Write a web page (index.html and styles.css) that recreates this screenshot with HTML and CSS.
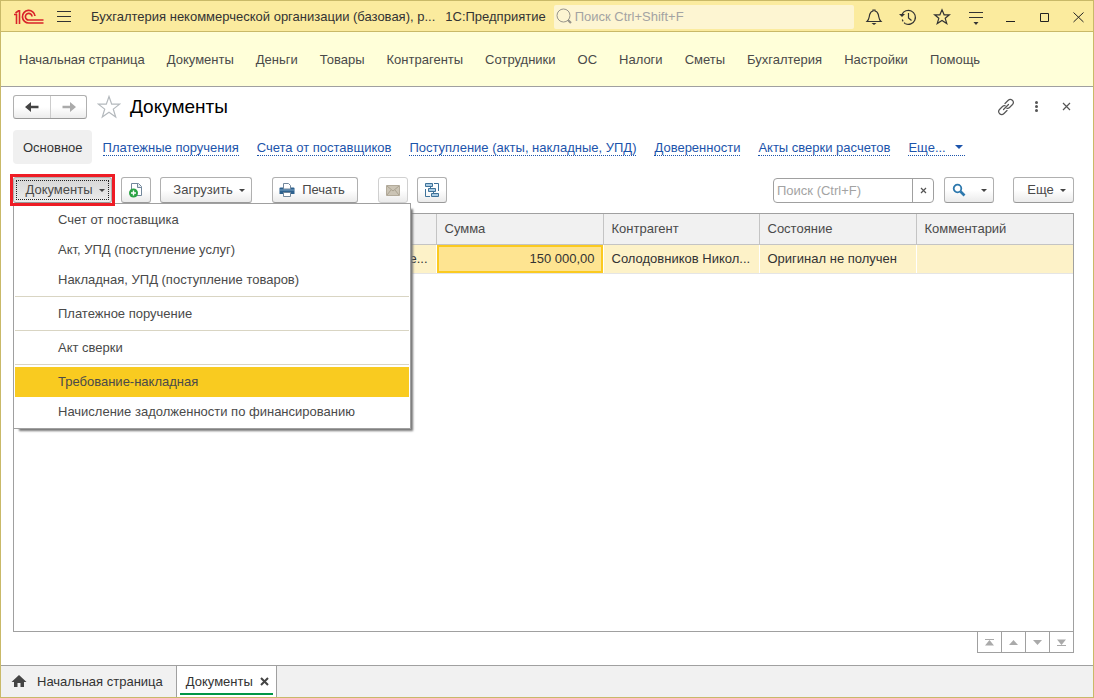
FILE: index.html
```html
<!DOCTYPE html>
<html lang="ru">
<head>
<meta charset="utf-8">
<title>Документы</title>
<link rel="stylesheet" href="styles.css">
</head>
<body>
<div class="window">
  <header class="titlebar">
    <svg class="logo" width="30" height="16" viewBox="0 0 30 16" fill="none" stroke="#d9232a" aria-label="1С">
      <path d="M0 5.500h2.500v9.500M1.500 4L4.500 1.800h1V15" stroke-width="1.600"/>
      <path d="M21 7A6.300 6.300 0 1 0 15 14H29.500" stroke-width="1.700"/>
      <path d="M18 7.500A3.300 3.300 0 1 0 15 11H29.500" stroke-width="1.700"/>
    </svg>
    <button class="icon-btn burger" aria-label="Меню"><svg width="16" height="14" viewBox="0 0 16 14" stroke="#333"><path d="M1 1.500h14M1 6.500h14M1 11.500h14"/></svg></button>
    <span class="app-name">Бухгалтерия некоммерческой организации (базовая), р...</span>
    <span class="platform">1С:Предприятие</span>
    <label class="global-search">
      <svg width="17" height="17" viewBox="0 0 17 17" fill="none" stroke="#97948b"><circle cx="7.500" cy="7.500" r="6.500"/><path d="M12 12l3 3" stroke-width="2.200"/></svg>
      <input type="text" placeholder="Поиск Ctrl+Shift+F" aria-label="Поиск Ctrl+Shift+F">
    </label>
    <div class="title-actions">
      <button class="icon-btn" aria-label="Уведомления"><svg width="18" height="18" viewBox="0 0 18 18" fill="none" stroke="#333" stroke-width="1.200"><path d="M2 13.500C4.500 11 4 9 4.700 6.500 5.300 4.300 6.500 3.300 8 3V2h2v1c1.500.3 2.700 1.300 3.300 3.500.7 2.500.2 4.500 2.700 7z"/><path d="M6.500 15h5L9 17z" fill="#333" stroke="none"/></svg></button>
      <button class="icon-btn" aria-label="История"><svg width="18" height="18" viewBox="0 0 18 18" fill="none" stroke="#333" stroke-width="1.200"><path d="M3 6.500A7 7 0 1 1 6.500 15.700" /><path d="M3.300 11.500A7 7 0 0 0 6.500 15.700" stroke-dasharray="2 1.500"/><path d="M9.500 5v5l3 2.500"/><path d="M0 6h6L3 9z" fill="#333" stroke="none"/></svg></button>
      <button class="icon-btn" aria-label="Избранное"><svg width="18" height="18" viewBox="0 0 18 18" fill="none" stroke="#333" stroke-width="1.200"><path d="M9 1.800l2.100 5h5.300l-4.200 3.500 1.600 5.300L9 12.500l-4.800 3.100 1.600-5.300L1.600 6.800h5.300z"/></svg></button>
      <button class="icon-btn" aria-label="Настройка"><svg width="18" height="18" viewBox="0 0 18 18" fill="none" stroke="#333"><path d="M2 4.500h14M2 9.500h14"/><path d="M6.500 14h5L9 17z" fill="#333" stroke="none"/></svg></button>
      <button class="icon-btn" aria-label="Свернуть"><svg width="18" height="18" viewBox="0 0 18 18" stroke="#222"><path d="M5 13.500h9"/></svg></button>
      <button class="icon-btn" aria-label="Развернуть"><svg width="18" height="18" viewBox="0 0 18 18" fill="none" stroke="#222"><path d="M5.500 5.500h8v8h-8z"/></svg></button>
      <button class="icon-btn" aria-label="Закрыть"><svg width="18" height="18" viewBox="0 0 18 18" stroke="#222"><path d="M4.500 4.500l10 9.500M14.500 4.500l-10 9.500"/></svg></button>
    </div>
  </header>

  <nav class="sections">
    <a href="#">Начальная страница</a><a href="#">Документы</a><a href="#">Деньги</a><a href="#">Товары</a><a href="#">Контрагенты</a><a href="#">Сотрудники</a><a href="#">ОС</a><a href="#">Налоги</a><a href="#">Сметы</a><a href="#">Бухгалтерия</a><a href="#">Настройки</a><a href="#">Помощь</a>
  </nav>

  <main class="page">
    <div class="page-head">
      <div class="history">
        <button aria-label="Назад"><svg width="16" height="12" viewBox="0 0 16 12"><path d="M1 6l6-5v3.800h7.500v2.400H7V11z" fill="#444"/></svg></button>
        <button aria-label="Вперед"><svg width="16" height="12" viewBox="0 0 16 12"><path d="M15 6L9 1v3.800H1.500v2.400H9V11z" fill="#aaa"/></svg></button>
      </div>
      <button class="icon-btn fav" aria-label="В избранное"><svg width="24" height="24" viewBox="0 0 24 24" fill="none" stroke="#b4b9bd" stroke-width="1.200"><path d="M12 1.500l2.700 7.700h7.900l-6.300 4.900 2.400 8L12 17.300l-6.700 4.800 2.400-8L1.400 9.200h7.900z"/></svg></button>
      <h1>Документы</h1>
      <div class="page-actions">
        <button class="icon-btn" aria-label="Ссылка"><svg width="18" height="18" viewBox="0 0 18 18" fill="none" stroke="#555" stroke-width="1.200" stroke-linecap="round"><path d="M6.500 11.500l5-5"/><path d="M8 5.500L11 2.500c3-3 7 1 4.500 4L12.500 9.500c-.8.8-1.800 1-2.700.7"/><path d="M10 12.500L7 15.500c-3 3-7-1-4.500-4l3-3c.8-.8 1.800-1 2.700-.7"/></svg></button>
        <button class="icon-btn" aria-label="Еще действия"><svg width="18" height="18" viewBox="0 0 18 18" fill="#555"><circle cx="9.500" cy="4.500" r="1.500"/><circle cx="9.500" cy="8.500" r="1.500"/><circle cx="9.500" cy="12.500" r="1.500"/></svg></button>
        <button class="icon-btn" aria-label="Закрыть страницу"><svg width="18" height="18" viewBox="0 0 18 18" stroke="#555" stroke-width="1.200"><path d="M6 5l7 7M13 5l-7 7"/></svg></button>
      </div>
    </div>

    <nav class="subnav">
      <span class="current">Основное</span>
      <a href="#">Платежные поручения</a>
      <a href="#">Счета от поставщиков</a>
      <a href="#">Поступление (акты, накладные, УПД)</a>
      <a href="#">Доверенности</a>
      <a href="#">Акты сверки расчетов</a>
      <a href="#" class="more">Еще...<i class="caret blue"></i></a>
    </nav>

    <div class="toolbar">
      <div class="dropdown">
        <button class="btn docs-btn">Документы<i class="caret"></i></button>
        <div class="marker"></div>
        <div class="menu" role="menu">
          <button role="menuitem">Счет от поставщика</button>
          <button role="menuitem">Акт, УПД (поступление услуг)</button>
          <button role="menuitem">Накладная, УПД (поступление товаров)</button>
          <hr>
          <button role="menuitem">Платежное поручение</button>
          <hr>
          <button role="menuitem">Акт сверки</button>
          <hr>
          <button role="menuitem" class="active">Требование-накладная</button>
          <button role="menuitem">Начисление задолженности по финансированию</button>
        </div>
      </div>
      <button class="btn square" aria-label="Создать"><svg width="16" height="16" viewBox="0 0 16 16"><path d="M3.500 1.500h7l3 3v9h-10z" fill="#fff" stroke="#72879b"/><path d="M9.500 1.500v4h4" fill="#dfe7ee" stroke="#72879b"/><circle cx="5.500" cy="11" r="4.500" fill="#2ba344"/><path d="M5.500 8.500v5M3 11h5" stroke="#fff" stroke-width="1.400"/></svg></button>
      <button class="btn load">Загрузить<i class="caret"></i></button>
      <button class="btn print"><svg width="16" height="16" viewBox="0 0 16 16"><path d="M1.500 5.500h13q1 0 1 1V12h-15V6.500q0-1 1-1z" fill="#2d618e"/><path d="M4.500 7V1.500h5l2 2V7z" fill="#fff" stroke="#72879b"/><path d="M1 8h14" stroke="#7ba3c4"/><path d="M4.500 10.500h7v4h-7z" fill="#fff" stroke="#72879b"/></svg>Печать</button>
      <button class="btn square mail" aria-label="Отправить" disabled><svg width="14" height="11" viewBox="0 0 14 11"><path d="M.5.5h13v10H.500z" fill="#cbc4b5" stroke="#b3ab9b"/><path d="M1 1l6 5 6-5M1 10l4-5M13 10L9 5" fill="none" stroke="#aaa291"/></svg></button>
      <button class="btn square" aria-label="Структура"><svg width="16" height="16" viewBox="0 0 16 16" fill="#a9cbe3" stroke="#3f7299"><path d="M1.500 1.500h7v3h-7zM4.500 6.500h7v3h-7zM7.500 11.500h7v3h-7z"/><path d="M10 1.500h4.500V9M1.500 7v7.500H6M6.500 5v1.500M9.500 10v1.500" fill="none"/></svg></button>
      <div class="toolbar-right">
        <div class="search">
          <input type="text" placeholder="Поиск (Ctrl+F)" aria-label="Поиск (Ctrl+F)">
          <button aria-label="Очистить"><svg width="7" height="7" viewBox="0 0 7 7" stroke="#555" stroke-width="1.200"><path d="M1 1l5 5M6 1L1 6"/></svg></button>
        </div>
        <button class="btn find" aria-label="Найти"><svg width="14" height="14" viewBox="0 0 14 14" fill="none" stroke="#2d78ad"><circle cx="5.500" cy="5.500" r="3.800" stroke-width="1.800"/><path d="M8.500 8.500l4 4" stroke-width="2.600"/></svg><i class="caret"></i></button>
        <button class="btn more-btn">Еще<i class="caret"></i></button>
      </div>
    </div>

    <div class="grid-box">
      <table>
        <colgroup><col class="c-doc"><col class="c-sum"><col class="c-agent"><col class="c-state"><col></colgroup>
        <thead><tr><th></th><th>Сумма</th><th>Контрагент</th><th>Состояние</th><th>Комментарий</th></tr></thead>
        <tbody><tr><td class="right">е...</td><td class="right selected">150 000,00</td><td>Солодовников Никол...</td><td>Оригинал не получен</td><td></td></tr></tbody>
      </table>
    </div>
    <div class="pager">
      <button aria-label="В начало"><svg width="9" height="7" viewBox="0 0 9 7" fill="#aaa"><path d="M0 0h9v1H0zM4.500 1L9 6.500H0z"/></svg></button>
      <button aria-label="Вверх"><svg width="9" height="7" viewBox="0 0 9 7" fill="#aaa"><path d="M4.500 1L9 6H0z"/></svg></button>
      <button aria-label="Вниз"><svg width="9" height="7" viewBox="0 0 9 7" fill="#aaa"><path d="M0 1h9L4.500 6z"/></svg></button>
      <button aria-label="В конец"><svg width="9" height="7" viewBox="0 0 9 7" fill="#aaa"><path d="M0 .5h9L4.500 6zM0 6h9v1H0z"/></svg></button>
    </div>
  </main>

  <footer class="tabs">
    <a href="#" class="home"><svg width="16" height="16" viewBox="0 0 16 16"><path d="M8 1l7.500 7H13v5H9.500V9h-3v4H3V8H.500z" fill="#444"/></svg>Начальная страница</a>
    <div class="tab"><span>Документы</span><button class="icon-btn" aria-label="Закрыть вкладку"><svg width="9" height="9" viewBox="0 0 9 9" stroke="#444" stroke-width="2"><path d="M1 1l7 7M8 1L1 8"/></svg></button></div>
  </footer>
</div>
</body>
</html>
```
FILE: styles.css
```css
* { box-sizing: border-box; }
html, body { height: 100%; margin: 0; }
body, button, input {
  font-family: "Liberation Sans", Arial, sans-serif;
  font-size: 13px;
  line-height: 16px;
  color: #4a4a4a;
}
button { padding: 0; cursor: pointer; }
svg { display: block; flex: none; }
a { color: inherit; text-decoration: none; }

.window {
  display: flex;
  flex-direction: column;
  min-height: 100vh;
  border: 1px solid #c9b968;
  background: #fff;
}
.icon-btn { border: 0; background: none; display: flex; align-items: center; justify-content: center; }

.titlebar {
  display: flex;
  align-items: center;
  height: 31px;
  padding: 1px 6px 0 13px;
  background: #fbeb9e;
  border-bottom: 1px solid #c9b968;
  color: #333;
  white-space: nowrap;
}
.burger { margin: 0 19px 0 12px; }
.platform { margin: 0 8px 0 10px; }
.global-search {
  flex: 1;
  display: flex;
  align-items: center;
  gap: 2px;
  height: 24px;
  padding-left: 2px;
  border-radius: 2px;
  background: #fdf5d2;
}
.global-search input { flex: 1; min-width: 0; border: 0; padding: 0; outline: 0; background: none; }
input::placeholder { color: #a3a3a3; opacity: 1; }
.title-actions { display: flex; gap: 16px; margin-left: 11px; }

.sections {
  display: flex;
  align-items: center;
  gap: 22px;
  height: 55px;
  padding: 2px 18px 0;
  background: #ffffd9;
  border-bottom: 1px solid #a0a0a0;
  white-space: nowrap;
}

.page { flex: 1; display: flex; flex-direction: column; padding: 8px 19px 12px 12px; }
.page-head { display: flex; align-items: center; height: 24px; }
.history { display: flex; height: 24px; border: 1px solid #b0b0b0; border-bottom-color: #999; border-radius: 3px; background: linear-gradient(#fff 50%, #ececec); }
.history button { display: flex; align-items: center; justify-content: center; width: 36px; border: 0; background: none; }
.history button + button { border-left: 1px solid #ccc; }
.fav { margin: 0 9px 0 10px; }
h1 { margin: 0; font-size: 19px; line-height: 24px; font-weight: 400; color: #000; }
.page-actions { display: flex; gap: 12px; margin-left: auto; margin-right: -1px; }

.subnav { display: flex; align-items: center; gap: 18px; margin-top: 11px; height: 34px; white-space: nowrap; }
.subnav a { color: #1c54ab; line-height: 14px; padding-top: 2px; border-bottom: 1px dotted #1c54ab; }
.current { padding: 10px 9px 8px 10px; margin-right: -7px; border-radius: 4px; background: #f0f0f0; color: #333; }
.caret { display: inline-block; border: 3px solid transparent; border-top-color: #444; border-bottom: 0; }
.caret.blue { border-width: 4px; border-top-color: #1c54ab; border-bottom: 0; margin-left: 9px; margin-right: 2px; vertical-align: 3px; }

.toolbar { display: flex; margin-top: 13px; height: 26px; }
.btn {
  display: flex;
  align-items: center;
  justify-content: center;
  gap: 6px;
  height: 26px;
  border: 1px solid #b0b0b0;
  border-bottom-color: #999;
  border-radius: 3px;
  background: linear-gradient(#fff 50%, #ebebeb);
}
.square { width: 30px; }
.dropdown { position: relative; margin-right: 9px; }
.docs-btn { width: 99px; padding-left: 5px; background: linear-gradient(#d6d6d6, #ececec); outline: 1px dotted #222; outline-offset: -4px; }
.marker { position: absolute; inset: -3px; z-index: 3; border: 3px solid #ee1c25; pointer-events: none; }
.load { width: 92px; margin: 0 20px 0 9px; padding-left: 6px; }
.print { width: 86px; margin-right: 20px; padding-right: 6px; gap: 7px; }
.mail { margin-right: 9px; border-color: #d0d0d0; }
.toolbar-right { display: flex; margin-left: auto; }
.search { display: flex; width: 161px; height: 25px; margin: 1px 10px 0 0; border: 1px solid #a0a0a0; border-radius: 4px; }
.search input { flex: 1; min-width: 0; border: 0; outline: 0; padding: 0 3px; background: none; }
.search button { display: flex; align-items: center; justify-content: center; width: 21px; border: 0; border-left: 1px solid #a0a0a0; background: none; }
.find { width: 50px; gap: 15px; margin-right: 19px; }
.more-btn { width: 61px; padding-left: 6px; }

.menu {
  position: absolute;
  top: 26px;
  left: 0;
  z-index: 2;
  width: 398px;
  padding: 1px;
  border: 1px solid #a0a0a0;
  background: #fff;
  box-shadow: 4px 4px 2px -2px #777;
}
.menu button { display: block; width: 100%; height: 30px; padding: 0 43px; border: 0; background: none; text-align: left; white-space: nowrap; }
.menu .active { background: #f9cb20; }
.menu hr { height: 1px; margin: 1px 0 2px; border: 0; background: #d9d5c3; }

.grid-box { flex: 1; margin-top: 10px; border: 1px solid #a0a0a0; }
table { width: 100%; table-layout: fixed; border-collapse: collapse; }
.c-doc { width: 422px; }
.c-sum { width: 167px; }
.c-agent { width: 156px; }
.c-state { width: 157px; }
th, td { padding: 0 8px; text-align: left; font-weight: 400; white-space: nowrap; overflow: hidden; }
th { height: 30px; background: #f1f1f1; border-right: 1px solid #c4c4c4; border-bottom: 1px solid #c4c4c4; }
td { height: 29px; background: #fdf2c8; color: #333; border-right: 1px solid #fff; border-bottom: 1px solid #e5e5e5; }
th:last-child, td:last-child { border-right: 0; }
.right { text-align: right; }
.selected { background: #fee491; box-shadow: inset 0 0 0 2px #fbca20; }

.pager { display: flex; align-self: flex-end; margin-top: -1px; border: 1px solid #a0a0a0; }
.pager button { display: flex; align-items: center; justify-content: center; width: 24px; height: 20px; border: 0; border-left: 1px solid #a0a0a0; background: #fff; }
.pager button:first-child { width: 23px; border-left: 0; }

.tabs { display: flex; height: 32px; background: #f1f1f1; border-top: 1px solid #a0a0a0; color: #333; white-space: nowrap; }
.home { display: flex; align-items: center; gap: 10px; padding: 0 13px 0 10px; }
.tab { position: relative; display: flex; align-items: center; gap: 7px; padding: 0 7px 0 9px; border: solid #a0a0a0; border-width: 0 1px; background: #fff; }
.tab::after { content: ""; position: absolute; left: 3px; right: 3px; bottom: 2px; height: 2px; background: #009646; }
```
